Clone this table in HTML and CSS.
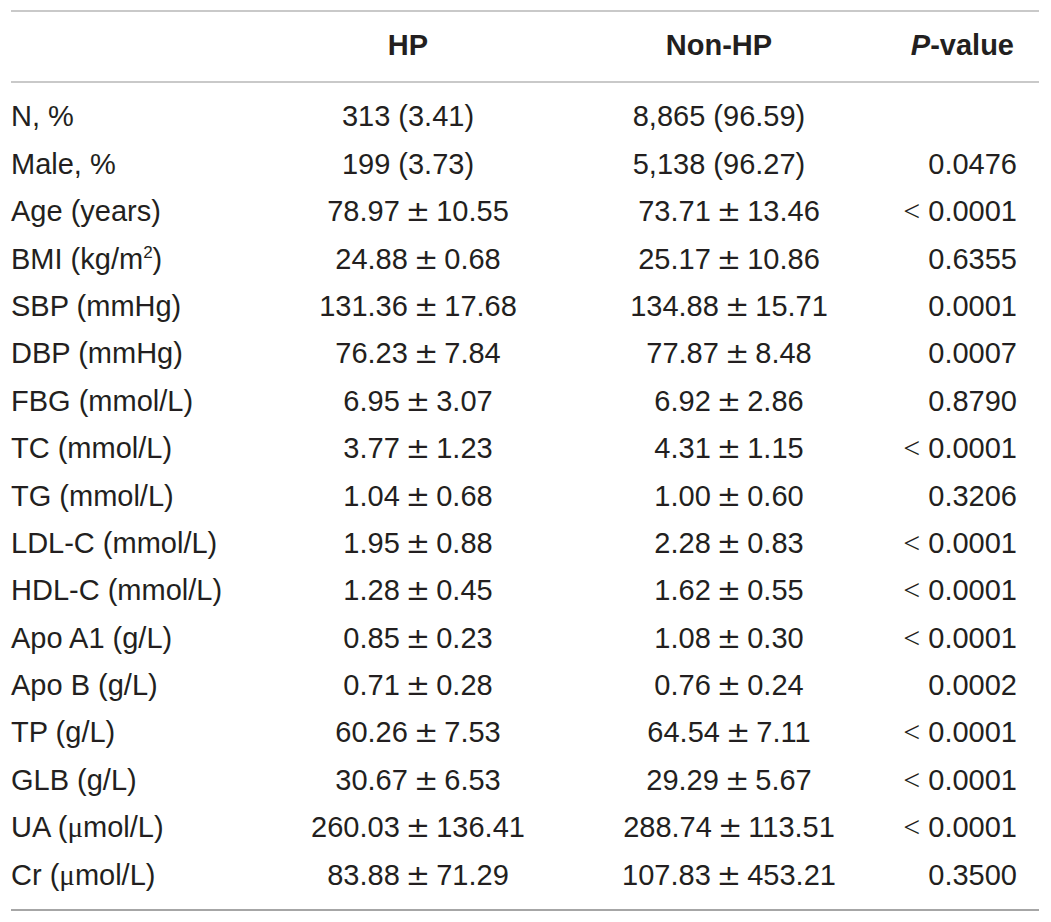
FILE: index.html
```html
<!DOCTYPE html>
<html lang="en">
<head>
<meta charset="utf-8">
<title>Table</title>
<link rel="stylesheet" href="styles.css">
</head>
<body>
<div class="table">
  <div class="row head">
    <div class="c label"></div>
    <div class="c num">HP</div>
    <div class="c num2">Non-HP</div>
    <div class="c pv"><i>P</i>-value</div>
  </div>
  <div class="tbody">
    <div class="row">
      <div class="c label">N, %</div>
      <div class="c num">313 (3.41)</div>
      <div class="c num2">8,865 (96.59)</div>
      <div class="c pv"></div>
    </div>
    <div class="row">
      <div class="c label">Male, %</div>
      <div class="c num">199 (3.73)</div>
      <div class="c num2">5,138 (96.27)</div>
      <div class="c pv">0.0476</div>
    </div>
    <div class="row">
      <div class="c label">Age (years)</div>
      <div class="c num sd">78.97 <span class="pm">±</span> 10.55</div>
      <div class="c num2 sd">73.71 <span class="pm">±</span> 13.46</div>
      <div class="c pv"><span class="lt">&lt;</span> 0.0001</div>
    </div>
    <div class="row">
      <div class="c label">BMI (kg/m<sup>2</sup>)</div>
      <div class="c num sd">24.88 <span class="pm">±</span> 0.68</div>
      <div class="c num2 sd">25.17 <span class="pm">±</span> 10.86</div>
      <div class="c pv">0.6355</div>
    </div>
    <div class="row">
      <div class="c label">SBP (mmHg)</div>
      <div class="c num sd">131.36 <span class="pm">±</span> 17.68</div>
      <div class="c num2 sd">134.88 <span class="pm">±</span> 15.71</div>
      <div class="c pv">0.0001</div>
    </div>
    <div class="row">
      <div class="c label">DBP (mmHg)</div>
      <div class="c num sd">76.23 <span class="pm">±</span> 7.84</div>
      <div class="c num2 sd">77.87 <span class="pm">±</span> 8.48</div>
      <div class="c pv">0.0007</div>
    </div>
    <div class="row">
      <div class="c label">FBG (mmol/L)</div>
      <div class="c num sd">6.95 <span class="pm">±</span> 3.07</div>
      <div class="c num2 sd">6.92 <span class="pm">±</span> 2.86</div>
      <div class="c pv">0.8790</div>
    </div>
    <div class="row">
      <div class="c label">TC (mmol/L)</div>
      <div class="c num sd">3.77 <span class="pm">±</span> 1.23</div>
      <div class="c num2 sd">4.31 <span class="pm">±</span> 1.15</div>
      <div class="c pv"><span class="lt">&lt;</span> 0.0001</div>
    </div>
    <div class="row">
      <div class="c label">TG (mmol/L)</div>
      <div class="c num sd">1.04 <span class="pm">±</span> 0.68</div>
      <div class="c num2 sd">1.00 <span class="pm">±</span> 0.60</div>
      <div class="c pv">0.3206</div>
    </div>
    <div class="row">
      <div class="c label">LDL-C (mmol/L)</div>
      <div class="c num sd">1.95 <span class="pm">±</span> 0.88</div>
      <div class="c num2 sd">2.28 <span class="pm">±</span> 0.83</div>
      <div class="c pv"><span class="lt">&lt;</span> 0.0001</div>
    </div>
    <div class="row">
      <div class="c label">HDL-C (mmol/L)</div>
      <div class="c num sd">1.28 <span class="pm">±</span> 0.45</div>
      <div class="c num2 sd">1.62 <span class="pm">±</span> 0.55</div>
      <div class="c pv"><span class="lt">&lt;</span> 0.0001</div>
    </div>
    <div class="row">
      <div class="c label">Apo A1 (g/L)</div>
      <div class="c num sd">0.85 <span class="pm">±</span> 0.23</div>
      <div class="c num2 sd">1.08 <span class="pm">±</span> 0.30</div>
      <div class="c pv"><span class="lt">&lt;</span> 0.0001</div>
    </div>
    <div class="row">
      <div class="c label">Apo B (g/L)</div>
      <div class="c num sd">0.71 <span class="pm">±</span> 0.28</div>
      <div class="c num2 sd">0.76 <span class="pm">±</span> 0.24</div>
      <div class="c pv">0.0002</div>
    </div>
    <div class="row">
      <div class="c label">TP (g/L)</div>
      <div class="c num sd">60.26 <span class="pm">±</span> 7.53</div>
      <div class="c num2 sd">64.54 <span class="pm">±</span> 7.11</div>
      <div class="c pv"><span class="lt">&lt;</span> 0.0001</div>
    </div>
    <div class="row">
      <div class="c label">GLB (g/L)</div>
      <div class="c num sd">30.67 <span class="pm">±</span> 6.53</div>
      <div class="c num2 sd">29.29 <span class="pm">±</span> 5.67</div>
      <div class="c pv"><span class="lt">&lt;</span> 0.0001</div>
    </div>
    <div class="row">
      <div class="c label">UA (<span class="mu">μ</span>mol/L)</div>
      <div class="c num sd">260.03 <span class="pm">±</span> 136.41</div>
      <div class="c num2 sd">288.74 <span class="pm">±</span> 113.51</div>
      <div class="c pv"><span class="lt">&lt;</span> 0.0001</div>
    </div>
    <div class="row">
      <div class="c label">Cr (<span class="mu">μ</span>mol/L)</div>
      <div class="c num sd">83.88 <span class="pm">±</span> 71.29</div>
      <div class="c num2 sd">107.83 <span class="pm">±</span> 453.21</div>
      <div class="c pv">0.3500</div>
    </div>
  </div>
</div>
</body>
</html>
```

FILE: styles.css
```css
html, body {
  margin: 0;
  padding: 0;
  background: #ffffff;
}

body {
  font-family: "Liberation Sans", Arial, Helvetica, sans-serif;
  font-size: 29px;
  color: #231f20;
}

.table {
  width: 1028px;
  margin: 10px 0 0 11px;
  border-bottom: 2px solid #a6a6a6;
}

.row {
  display: grid;
  grid-template-columns: 250px 294px 328px 134px;
  padding-right: 22px;
  height: 47.4px;
  line-height: 47.4px;
  white-space: nowrap;
}

.head {
  border-top: 2px solid #c9c9c9;
  border-bottom: 2px solid #c9c9c9;
  padding-top: 10px;
  padding-bottom: 11.5px;
  font-weight: bold;
}

.tbody {
  padding-top: 10.5px;
  padding-bottom: 10px;
}

.c {
  height: 47.4px;
  overflow: visible;
}

.c.label {
  text-align: left;
}

.c.num,
.c.num2 {
  text-align: center;
}

.c.sd {
  padding-left: 20px;
}

.c.pv {
  text-align: right;
}

.head .c.pv {
  padding-right: 3px;
}

.pm {
  font-family: "DejaVu Sans", sans-serif;
  line-height: 1;
  margin: 0 -2px;
}

.lt {
  font-family: "Liberation Serif", serif;
  font-size: 30px;
  line-height: 1;
}

.mu {
  font-family: "Liberation Serif", serif;
  line-height: 1;
}

sup {
  font-size: 17px;
  line-height: 0;
  vertical-align: 11px;
}
```
